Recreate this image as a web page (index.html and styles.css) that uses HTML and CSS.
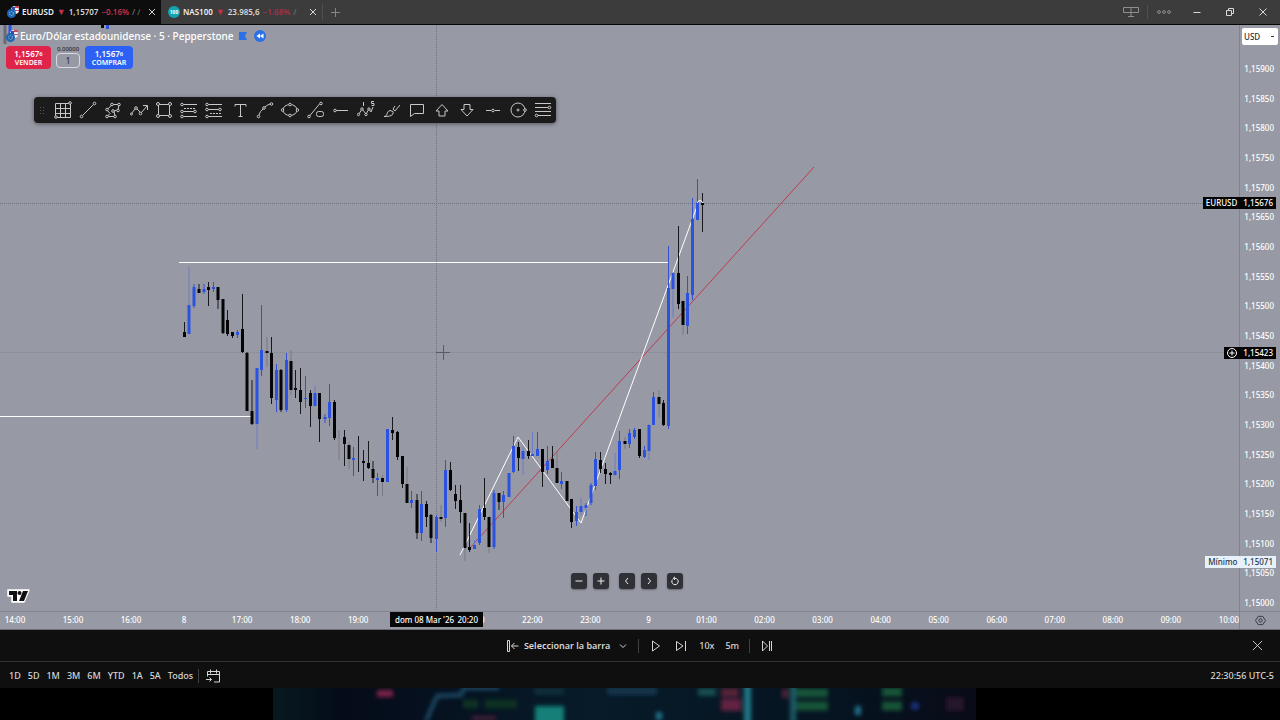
FILE: index.html
```html
<!DOCTYPE html>
<html lang="es">
<head>
<meta charset="utf-8">
<title>EURUSD 1,15707</title>
<link rel="stylesheet" href="styles.css">
</head>
<body>
<header class="titlebar">
  <div class="tab tab-active">
    <svg class="pair" viewBox="0 0 12 12"><circle cx="8" cy="4" r="4" fill="#e9eef8"/><path d="M8 0h4v2H8zM8 4h4v1H8z" fill="#d1485a"/><path d="M5 1h3v3H5z" fill="#2b4ea0"/><circle cx="4.500" cy="7.500" r="4.500" fill="#1d67b4"/><circle cx="4.500" cy="7.500" r="2" fill="none" stroke="#b9cf7c" stroke-dasharray="1 1"/></svg>
    <span class="tab-name">EURUSD</span><span class="down">▼</span><span>1,15707</span><span class="neg">−0.16%</span><span class="fade">/ ∕</span>
    <button class="close" aria-label="Cerrar pestaña"><svg viewBox="0 0 8 8"><path d="M1 1l6 6M7 1L1 7"/></svg></button>
  </div>
  <div class="tab tab-second">
    <svg class="pair" viewBox="0 0 12 12"><circle cx="6" cy="6" r="6" fill="#14a3b0"/><text x="6" y="8" text-anchor="middle" class="badge-text">100</text></svg>
    <span class="tab-name">NAS100</span><span class="down">▼</span><span>23.985,6</span><span class="neg dim">−1.68%</span><span class="fade">/</span>
    <button class="close" aria-label="Cerrar pestaña"><svg viewBox="0 0 8 8"><path d="M1 1l6 6M7 1L1 7"/></svg></button>
  </div>
  <button class="newtab" aria-label="Nueva pestaña"><svg viewBox="0 0 10 10"><path d="M5 0v10M0 5h10"/></svg></button>
  <div class="window-tools">
    <button class="wide" aria-label="Disposición"><svg viewBox="0 0 16 12"><path d="M.5 1.500h15v5H.5zM8 1.500v9M5 10.500h6"/></svg></button>
    <button class="wide dots" aria-label="Más"><svg viewBox="0 0 14 6"><circle cx="2" cy="3" r="1.400"/><circle cx="7" cy="3" r="1.400"/><circle cx="12" cy="3" r="1.400"/></svg></button>
    <button aria-label="Minimizar"><svg viewBox="0 0 8 8"><path d="M.5 4.500h7"/></svg></button>
    <button aria-label="Restaurar"><svg viewBox="0 0 8 8"><path d="M.5 2.500h5v5h-5zM2.500 2V.5h5v5H6"/></svg></button>
    <button aria-label="Cerrar"><svg viewBox="0 0 8 8"><path d="M.5.5l7 7M7.500.5l-7 7"/></svg></button>
  </div>
</header>

<main class="workspace">
  <section class="pane">
    <svg class="plot">
      <g transform="translate(0 -25)">
        <path class="dotted" d="M0 203.500H1239"/>
        <path class="dotted soft" d="M0 352.500H1239"/>
        <path class="dotted" d="M436.500 25V612"/>
        <path class="faint-body" d="M5 25V44"/>
        <path class="black-body" d="M102.500 25V28"/>
        <path class="blue-body" d="M10 25V36M107.500 25V29"/>
        <path class="white-line" d="M179 262.500H668M0 416.500H252"/>
        <path class="red-line" d="M469 549L814 167"/>
        <path class="white-line" d="M460 555L518 437L581 523L699 201"/>
        <path class="faint-wick" d="M267 337V367M339 430V460M291 350V395M349 442V469M382.500 475V496M407 467V503M465 548V561M489 516V553M557 452V483M625 437V449M659 390V417M683 301V335M441 505V522"/>
        <path class="faint-blue" d="M189 267V306M257 424V449M315 386V406M523 447V475M532.500 432V456M581 498V515M615 453V476M649 424V460M673 272V318M474.500 540V549"/>
        <path class="black-wick" d="M184.500 322V337M199 284V293M208.500 282V306M218 287V309M223 299V334M227.500 310V336M232.500 332V338M242.500 294V353M247 352V411M252 380V425M271.500 337V404M281 369V412M295.500 370V398M300.500 368V414M310.500 390V427M319.500 393V442M334.500 400V440M344.500 430V466M358.500 436V472M363.500 450V481M368.500 441V469M373 461V483M392.500 417V440M397.500 431V460M402.500 456V488M417 494V539M426.500 501V527M431 514V543M450.500 462V491M455.500 485V509M460.500 485V523M469.500 523V552M484.500 478V520M499 493V510M518.500 442V471M528.500 440V459M542.500 449V487M552.500 446V468M567 481V501M571.500 499V528M600.500 452V473M605.500 463V484M610.500 472V484M639.500 429V458M663.500 400V426M678.500 226V309M702.500 193V232"/>
        <path class="blue-wick" d="M194 284V308M204 284V294M213.500 282V292M237.500 330V338M261.500 305V376M276.500 364V412M286.500 353V412M305.500 376V408M325 414V423M329.500 384V426M353.500 447V476M377.500 473V496M411.500 491V508M421.500 491V541M436.500 515V552M445.500 460V527M479.500 505V545M494 490V549M503.500 491V518M513.500 436V473M537.500 432V456M547.500 446V474M561.500 472V489M576.500 506V526M586 503V516M591 483V505M595.500 452V490M619.500 431V479M629.500 429V448M634.500 428V439M644.500 446V458M653.500 392V425M668.500 246V429M687.500 276V334M692.500 198V300M697.500 179V220"/>
        <path class="black-body" d="M184.500 332V337M199 289V293M208.500 287V290M218 287V300M223 299V333M227.500 320V334M232.500 332V336M242.500 329V352M247 353V411M252 411V424M267 351V353M271.500 353V398M281 370V410M291 361V390M295.500 388V390M300.500 390V402M310.500 393V406M319.500 393V419M334.500 402V438M344.500 437V444M349 445V459M363.500 461V463M368.500 463V468M373 469V478M382.500 478V482M392.500 430V433M397.500 432V457M402.500 456V484M407 484V503M417 500V533M426.500 504V517M431 515V538M441 517V519M450.500 470V490M455.500 494V501M460.500 500V512M465 513V548M469.500 547V550M484.500 508V517M489 517V547M499 493V502M518.500 447V458M528.500 451V456M542.500 449V472M552.500 459V468M557 468V483M567 481V501M571.500 499V522M600.500 460V469M605.500 469V474M610.500 473V475M625 441V444M639.500 429V456M659 397V404M663.500 403V425M678.500 273V304M683 301V325M702.500 203V205"/>
        <path class="blue-body" d="M189 305V334M194 287V306M204 289V292M213.500 287V289M237.500 332V335M257 368V424M261.500 350V370M276.500 370V400M286.500 360V410M305.500 398V399M315 393V406M325 417V419M329.500 402V418M353.500 458V460M377.500 478V480M387.500 429V482M411.500 500V503M421.500 504V533M436.500 517V539M445.500 470V518M474.500 545V549M479.500 509V543M494 493V547M503.500 495V502M509 473V497M513.500 446V472M523 451V459M532.500 454V456M537.500 449V456M547.500 461V470M561.500 481V484M576.500 512V521M581 506V512M586 505V508M591 485V503M595.500 459V486M615 471V475M619.500 441V470M629.500 433V444M634.500 430V437M644.500 450V457M649 425V451M653.500 397V425M668.500 288V426M673 273V289M687.500 293V326M692.500 219V295M697.500 202V220"/>
        <path class="white-line" d="M697 203Q700 198 703 203"/>
        <path class="cursor" d="M436 352.500H450M443.500 345V360"/>
      </g>
    </svg>

    <div class="legend">
      <svg class="pair" viewBox="0 0 12 12"><circle cx="8" cy="4" r="4" fill="#e9eef8"/><path d="M8 0h4v2H8zM8 4h4v1H8z" fill="#d1485a"/><path d="M5 1h3v3H5z" fill="#2b4ea0"/><circle cx="4.500" cy="7.500" r="4.500" fill="#1d67b4"/><circle cx="4.500" cy="7.500" r="2" fill="none" stroke="#9fc0df" stroke-dasharray="1 1"/></svg>
      <h1>Euro/Dólar estadounidense · 5 · Pepperstone</h1>
      <svg class="flag" viewBox="0 0 8 8"><path d="M0 0h8L6 4l2 4H0z"/></svg>
      <svg class="rewind" viewBox="0 0 12 12"><circle cx="6" cy="6" r="6"/><path d="M6 3.500v5L2.500 6zM9.500 3.500v5L6 6z"/></svg>
    </div>
    <div class="trade">
      <button class="order sell"><span>1,1567<sup>6</sup></span><span>VENDER</span></button>
      <div class="lot"><span>0,00000</span><button>1</button></div>
      <button class="order buy"><span>1,1567<sup>6</sup></span><span>COMPRAR</span></button>
    </div>

    <div class="drawbar" role="toolbar" aria-label="Herramientas de dibujo">
      <button aria-label="Cuadrícula"><svg viewBox="0 0 18 18"><path d="M1.500 2.500h15v14h-15zM6.500 2.500v14M11.500 2.500v14M1.500 7.500h15M1.500 12.500h15"/><circle cx="16" cy="2" r="1.300"/><circle cx="2" cy="16" r="1.300"/></svg></button>
      <button aria-label="Línea de tendencia"><svg viewBox="0 0 18 18"><path d="M3.500 14.500l11-11"/><circle cx="2.500" cy="15.500" r="1.300"/><circle cx="15.500" cy="2.500" r="1.300"/></svg></button>
      <button aria-label="Polígono"><svg viewBox="0 0 18 18"><path d="M3 9l5-5.500h7L14 9l-4 1 1 5.500H3l3-3z"/><circle cx="8" cy="3.500" r="1.300"/><circle cx="15" cy="3.500" r="1.300"/><circle cx="14" cy="9.500" r="1.300"/><circle cx="9" cy="10" r="1.300"/><circle cx="3" cy="8.500" r="1.300"/><circle cx="3" cy="15.500" r="1.300"/><circle cx="11" cy="15.500" r="1.300"/></svg></button>
      <button aria-label="Trayectoria"><svg viewBox="0 0 18 18"><path d="M1 13l4-5M7 8l4 4 6-7M13 4.500h4.500V9"/><circle cx="6" cy="7" r="1.300"/><circle cx="10.500" cy="12.500" r="1.300"/><circle cx="1.500" cy="13" r="1"/></svg></button>
      <button aria-label="Rectángulo"><svg viewBox="0 0 18 18"><path d="M3.500 3.500h11v11h-11z"/><circle cx="3" cy="3" r="1.500"/><circle cx="15" cy="3" r="1.500"/><circle cx="3" cy="15" r="1.500"/><circle cx="15" cy="15" r="1.500"/></svg></button>
      <button aria-label="Posición larga"><svg viewBox="0 0 18 18"><path d="M3 3.500h14M3 10.500h11M3 15.500h14"/><path d="M4 7.500h11" stroke-dasharray="2 1"/><circle cx="2" cy="3.500" r="1.300"/><circle cx="2" cy="10.500" r="1.300"/><circle cx="15" cy="10.500" r="1.300"/><circle cx="2" cy="15.500" r="1.300"/></svg></button>
      <button aria-label="Posición corta"><svg viewBox="0 0 18 18"><path d="M3 3.500h14M3 8.500h11M3 15.500h14"/><path d="M5 12.500h11" stroke-dasharray="2 1"/><circle cx="2" cy="3.500" r="1.300"/><circle cx="2" cy="8.500" r="1.300"/><circle cx="15" cy="8.500" r="1.300"/><circle cx="2" cy="15.500" r="1.300"/></svg></button>
      <button aria-label="Texto"><svg viewBox="0 0 18 18"><path d="M4 5.500v-2h11v2M9.500 3.500v12M7.500 15.500h4"/></svg></button>
      <button aria-label="Curva"><svg viewBox="0 0 18 18"><path d="M3 14q1-4 4-6M9 6q2-2 5-3"/><circle cx="2.500" cy="15.500" r="1.300"/><circle cx="8" cy="7" r="1.300"/><circle cx="15.500" cy="3" r="1.300"/></svg></button>
      <button aria-label="Elipse"><svg viewBox="0 0 18 18"><ellipse cx="9" cy="9" rx="7" ry="5.500"/><circle cx="9" cy="3.500" r="1.300"/><circle cx="9" cy="14.500" r="1.300"/><circle cx="1.500" cy="9" r="1.300"/><circle cx="16.500" cy="9" r="1.300"/></svg></button>
      <button aria-label="Línea con información"><svg viewBox="0 0 18 18"><path d="M2.500 15l10-12"/><circle cx="2" cy="15.500" r="1.300"/><circle cx="14" cy="2.500" r="1.300"/><rect x="9.500" y="10.500" width="7" height="5" rx="2"/></svg></button>
      <button aria-label="Rayo horizontal"><svg viewBox="0 0 18 18"><path d="M4 9.500h12"/><circle cx="3" cy="9.500" r="1.300"/></svg></button>
      <button aria-label="Ondas de Elliott"><svg viewBox="0 0 18 18"><path d="M2 13l3-5 4 5 3-5 2 3 2-5M6.500 1v4M6 1.500h1M17 .5h-2.500v2H17v2h-2.500"/><circle cx="1.500" cy="13.500" r="1.200"/><circle cx="5" cy="8" r="1.200"/><circle cx="9" cy="13.500" r="1.200"/><circle cx="12" cy="8" r="1.200"/></svg></button>
      <button aria-label="Pincel"><svg viewBox="0 0 18 18"><path d="M1 15.500c4 0 2-5 6-6l3 1c1 4-3 5-9 5zM10 8l2 2 5-6M10 8l2-3"/></svg></button>
      <button aria-label="Comentario"><svg viewBox="0 0 18 18"><path d="M2.500 3.500h13v9h-9l-4 3z"/></svg></button>
      <button aria-label="Flecha arriba"><svg viewBox="0 0 18 18"><path d="M9 3.500l6 6.500h-3v5H6v-5H3z"/></svg></button>
      <button aria-label="Flecha abajo"><svg viewBox="0 0 18 18"><path d="M9 15l6-6.500h-3v-5H6v5H3z"/></svg></button>
      <button aria-label="Línea horizontal"><svg viewBox="0 0 18 18"><path d="M2 9.500h5M11 9.500h5"/><circle cx="9" cy="9.500" r="1.300"/></svg></button>
      <button aria-label="Círculo"><svg viewBox="0 0 18 18"><circle cx="9" cy="9" r="7"/><circle cx="9" cy="9" r="1"/><circle cx="16" cy="9" r="1.300"/></svg></button>
      <button aria-label="Retroceso de Fibonacci"><svg viewBox="0 0 18 18"><path d="M1 2.500h16M1 6.500h13M1 10.500h16M4 14.500h13"/><circle cx="15.500" cy="6.500" r="1.300"/><circle cx="2.500" cy="14.500" r="1.300"/></svg></button>
    </div>

    <svg class="brand" viewBox="0 0 23 14"><path d="M1 1h21l-5 12H5V7H1z" fill="#fff" stroke="#fff" stroke-width="1.500" stroke-linejoin="round"/><path d="M2 2h8v10H6V6H2zM16 2h5l-4 10h-5z" fill="#101014"/><circle cx="12.500" cy="4" r="2" fill="#101014"/></svg>

    <div class="zoombar">
      <button aria-label="Alejar"><svg viewBox="0 0 10 10"><path d="M1.500 5h7"/></svg></button>
      <button aria-label="Acercar"><svg viewBox="0 0 10 10"><path d="M1.500 5h7M5 1.500v7"/></svg></button>
      <button class="gap" aria-label="Izquierda"><svg viewBox="0 0 10 10"><path d="M6 2L3.500 5 6 8"/></svg></button>
      <button aria-label="Derecha"><svg viewBox="0 0 10 10"><path d="M4 2l2.500 3L4 8"/></svg></button>
      <button class="gap" aria-label="Restablecer"><svg viewBox="0 0 10 10"><path d="M2.500 3.500A3.200 3.200 0 1 0 5 2.300H3.500M5 .8L3.300 2.300 5 3.800"/></svg></button>
    </div>
  </section>

  <aside class="price-axis">
    <select class="currency" aria-label="Divisa"><option>USD</option></select>
    <div class="prices">
      <span>1,15900</span><span>1,15850</span><span>1,15800</span><span>1,15750</span><span>1,15700</span><span>1,15650</span><span>1,15600</span><span>1,15550</span><span>1,15500</span><span>1,15450</span><span>1,15400</span><span>1,15350</span><span>1,15300</span><span>1,15250</span><span>1,15200</span><span>1,15150</span><span>1,15100</span><span>1,15050</span><span>1,15000</span>
    </div>
    <div class="tag tag-last"><span>EURUSD</span><span>1,15676</span></div>
    <div class="tag tag-cross"><svg viewBox="0 0 10 10"><circle cx="5" cy="5" r="4.500"/><path d="M5 2.500v5M2.500 5h5"/></svg><span>1,15423</span></div>
    <div class="tag tag-low"><span>Mínimo</span><span>1,15071</span></div>
  </aside>

  <div class="time-axis">
    <div class="hours hours-prev"><span>14:00</span><span>15:00</span><span>16:00</span></div>
    <div class="hours hours-main"><span>8</span><span>17:00</span><span>18:00</span><span>19:00</span><span></span><span>21:00</span><span>22:00</span><span>23:00</span><span>9</span><span>01:00</span><span>02:00</span><span>03:00</span><span>04:00</span><span>05:00</span><span>06:00</span><span>07:00</span><span>08:00</span><span>09:00</span><span>10:00</span></div>
    <div class="time-tag"><span>dom 08 Mar '26</span><span>20:20</span></div>
  </div>
  <button class="axis-settings" aria-label="Ajustes"><svg viewBox="0 0 12 12"><path d="M3.500 1.500h5L11.500 6l-3 4.500h-5L.5 6z"/><circle cx="6" cy="6" r="1.800"/></svg></button>
</main>

<section class="replay">
  <div class="replay-controls">
    <button class="select-bar"><svg viewBox="0 0 12 12"><path d="M.5.5h2v11h-2zM4.500 6h7M7.500 3l-3 3 3 3"/></svg>Seleccionar la barra<svg class="chev" viewBox="0 0 8 8"><path d="M1 2.500l3 3 3-3"/></svg></button>
    <i class="rule"></i>
    <button aria-label="Reproducir"><svg viewBox="0 0 12 12"><path d="M2.500 1v10l7-5z"/></svg></button>
    <button aria-label="Avanzar"><svg viewBox="0 0 12 12"><path d="M1.500 1.500v9L8 6zM10.500 1v10"/></svg></button>
    <button class="speed">10x</button>
    <button class="speed">5m</button>
    <i class="rule"></i>
    <button aria-label="Ir al tiempo real"><svg viewBox="0 0 12 12"><path d="M1.500 1v10L6.500 6zM8.500 1v10M10.500 1v10"/></svg></button>
  </div>
  <button class="replay-close" aria-label="Cerrar reproducción"><svg viewBox="0 0 12 12"><path d="M1 1l10 10M11 1L1 11"/></svg></button>
</section>

<footer class="ranges">
  <button>1D</button><button>5D</button><button>1M</button><button>3M</button><button>6M</button><button>YTD</button><button>1A</button><button>5A</button><button>Todos</button>
  <i class="rule"></i>
  <button aria-label="Ir a fecha"><svg viewBox="0 0 14 14"><path d="M1.500 7.500v-5h12v10.500h-5.500M1.500 5.500h12M4.500 .5v4M10.500 .5v4M0 10.500h5.500M3.500 8.500l2 2-2 2"/></svg></button>
  <span class="clock">22:30:56 UTC-5</span>
</footer>

<div class="backdrop">
  <svg viewBox="0 0 703 32" preserveAspectRatio="none">
    <defs><filter id="soft" x="-5%" y="-20%" width="110%" height="140%"><feGaussianBlur stdDeviation="2"/></filter>
    <linearGradient id="night"><stop offset="0" stop-color="#07191f"/><stop offset=".1" stop-color="#050b19"/><stop offset=".45" stop-color="#071b29"/><stop offset=".8" stop-color="#061320"/><stop offset="1" stop-color="#090b18"/></linearGradient></defs>
    <rect width="703" height="32" fill="url(#night)"/>
    <g filter="url(#soft)">
      <path d="M153 33L164 8L188 7L191 0H226" fill="none" stroke="#1b4b68" stroke-width="4"/>
      <rect x="104" y="2" width="16" height="7" fill="#7c2446"/>
      <path d="M190 16h15M212 16h32" stroke="#0d3024" stroke-width="9"/>
      <rect x="262" y="18" width="29" height="18" fill="#188078"/>
      <rect x="261" width="30" height="7" fill="#0d2d3a"/>
      <path d="M334 3h50" stroke="#12364a" stroke-width="8"/>
      <rect x="425" y="0" width="18" height="8" fill="#14504f"/>
      <rect x="448" y="0" width="18" height="9" fill="#572039"/><rect x="448" y="11" width="20" height="12" fill="#632442"/>
      <path d="M474.500 -4v40" stroke="#207786" stroke-width="7"/><path d="M520 -4v40" stroke="#1c5964" stroke-width="6"/>
      <rect x="509" y="1" width="6" height="9" fill="#502039"/>
      <path d="M523 5h32M523 18h32M609 4h20M609 18h20" stroke="#175537" stroke-width="9"/>
      <path d="M386 24v8M585 18v9" stroke="#22718a" stroke-width="6"/><circle cx="642" cy="18" r="4" fill="#17337a"/><rect x="199" y="28" width="24" height="4" fill="#481d39"/><rect x="673" y="9" width="18" height="14" fill="#28142c"/>
    </g>
  </svg>
</div>
</body>
</html>
```
FILE: styles.css
```css
* { box-sizing: border-box; }

body {
  margin: 0;
  height: 100vh;
  display: flex;
  flex-direction: column;
  overflow: hidden;
  background: #000;
  color: #d6d6d6;
  font: 500 9px/12px "Noto Sans", "Open Sans", sans-serif;
}

button {
  display: flex;
  align-items: center;
  justify-content: center;
  padding: 0;
  border: 0;
  background: none;
  color: inherit;
  font: inherit;
}

svg { display: block; flex: none; fill: none; stroke: currentColor; }

/* Title bar */
.titlebar {
  display: flex;
  height: 25px;
  flex: none;
  background: #3c3c3c;
  border-bottom: 1px solid #050505;
  white-space: nowrap;
}
.tab {
  display: flex;
  align-items: center;
  gap: 3px;
  width: 161px;
  padding: 0 5px 0 7px;
  font-size: 8px;
  font-weight: 600;
}
.tab-active { background: #0d0d0d; }
.tab-second { border-radius: 4px 0 0 0; }
.tab-name { color: #f0f0f0; }
.pair { width: 12px; height: 12px; stroke: none; }
.badge-text { fill: #fff; font: 700 5px "Noto Sans", sans-serif; }
.down { color: #c5304a; font-size: 9px; }
.neg { color: #c5304a; }
.dim { color: #a5304a; }
.fade { color: #6a6a6a; flex: 1; }
.close svg { width: 8px; height: 8px; }
.newtab { width: 25px; height: 16px; margin-top: 4px; border-left: 1px solid #505050; color: #8c8c8c; }
.newtab svg { width: 9px; height: 9px; }
.window-tools { display: flex; margin-left: auto; padding-right: 1px; color: #d8d8d8; }
.window-tools button { width: 33px; }
.window-tools svg { width: 8px; height: 8px; }
.window-tools .wide { color: #8f8f8f; }
.window-tools .wide svg { width: 16px; height: 12px; }
.window-tools .dots { border-left: 1px solid #505050; height: 14px; margin-top: 5px; }
.window-tools .dots svg { width: 14px; height: 6px; }

/* Chart */
.workspace {
  flex: 1;
  min-height: 0;
  display: grid;
  grid-template-columns: 1fr 41px;
  grid-template-rows: 1fr 18px;
  background: #979aa4;
  border-bottom: 1px solid #6d6f77;
}
.pane { position: relative; min-width: 0; overflow: hidden; }
.plot { position: absolute; inset: 0; width: 100%; height: 100%; }
.dotted { stroke: #70737c; stroke-dasharray: 1 1; }
.soft { stroke: #83868f; }
.white-line { stroke: #fff; }
.red-line { stroke: #c23a52; }
.black-wick { stroke: #17181c; }
.blue-wick { stroke: #3551d2; }
.faint-wick { stroke: #777a82; }
.faint-blue { stroke: #6d7bc9; }
.black-body { stroke: #050507; stroke-width: 3; }
.blue-body { stroke: #2c53e0; stroke-width: 3; }
.faint-body { stroke: #686b74; stroke-width: 3; }
.cursor { stroke: #5a5c64; }

.legend {
  position: relative;
  display: flex;
  align-items: center;
  height: 16px;
  margin: 3px 0 0 6px;
  gap: 2px;
}
.legend h1 { margin: 0; font-size: 10px; font-weight: 500; line-height: 16px; color: #fff; }
.legend .flag { width: 8px; height: 8px; margin: 0 5px 0 3px; fill: #2c70e8; stroke: none; }
.legend .rewind { width: 12px; height: 12px; stroke: none; fill: #2c70e8; }
.legend .rewind path { fill: #fff; }

.trade { position: relative; display: flex; margin: 2px 0 0 6px; gap: 5px; color: #fff; }
.order {
  flex-direction: column;
  width: 45px;
  height: 23px;
  border-radius: 4px;
  font-size: 8px;
  line-height: 9px;
  font-weight: 600;
}
.order span:last-child { font-size: 7px; }
.order sup { font-size: 6px; line-height: 0; vertical-align: 1px; }
.sell { background: #df2349; }
.buy { background: #2d61f3; width: 48px; }
.lot { width: 24px; font-size: 6px; line-height: 7px; color: #303238; text-align: center; }
.lot button { width: 24px; height: 15px; border: 1px solid #d9dbe1; border-radius: 4px; font-size: 8px; }

.drawbar {
  position: relative;
  display: flex;
  width: 522px;
  height: 26px;
  margin: 28px 0 0 34px;
  padding: 0 0 0 16px;
  border-radius: 4px;
  background: #1b1b1b;
  color: #c8c8c8;
  box-shadow: 0 1px 4px #55575f;
}
.drawbar::before {
  content: "";
  position: absolute;
  left: 5px;
  top: 9px;
  width: 5px;
  height: 9px;
  background: radial-gradient(circle, #575757 1px, transparent 1px) 0 0 / 3px 3px;
}
.drawbar button { flex: 1; }
.drawbar svg { width: 18px; height: 18px; }
.drawbar circle { fill: #1b1b1b; }

.brand { position: absolute; left: 7px; bottom: 8px; width: 23px; height: 14px; stroke: none; }

.zoombar {
  position: absolute;
  left: 571px;
  bottom: 22px;
  display: flex;
  gap: 6px;
  color: #f0f0f0;
}
.zoombar button { width: 16px; height: 16px; border-radius: 3px; background: #303136; box-shadow: 0 1px 2px #666971; }
.zoombar .gap { margin-left: 4px; }
.zoombar svg { width: 10px; height: 10px; }

/* Axes */
.price-axis {
  position: relative;
  display: flex;
  flex-direction: column;
  border-left: 1px solid #81848d;
  color: #fff;
  font-size: 8px;
  line-height: 10px;
}
.currency {
  appearance: none;
  width: 36px;
  height: 17px;
  margin: 3px 0 0 2px;
  padding: 0 2px;
  border: 0;
  border-radius: 2px;
  color: #2a2c32;
  font: inherit;
  background: #fff linear-gradient(#333, #333) no-repeat 29px 8px / 3px 1px;
}
.prices {
  flex: 1;
  display: flex;
  flex-direction: column;
  justify-content: space-between;
  padding: 19px 6px 3px 0;
  text-align: right;
}
.tag {
  position: absolute;
  right: 4px;
  display: flex;
  gap: 6px;
  height: 12px;
  padding: 0 3px;
  line-height: 12px;
  background: #050505;
}
.tag-last { top: 172px; }
.tag-cross { top: 322px; align-items: center; }
.tag-cross svg { width: 10px; height: 10px; }
.tag-low { top: 531px; background: #e6f1fc; color: #2a3444; }

.time-axis {
  position: relative;
  display: flex;
  min-width: 0;
  overflow: hidden;
  border-top: 1px solid #81848d;
  color: #fff;
  font-size: 8px;
  line-height: 16px;
}
.hours { display: grid; grid-auto-flow: column; text-align: center; }
.hours-prev { grid-auto-columns: 58px; margin-left: -14px; }
.hours-main { flex: 1; grid-auto-columns: 1fr; margin: 0 -19px 0 -5px; }
.time-tag {
  position: absolute;
  left: 390px;
  top: 0;
  display: flex;
  justify-content: space-between;
  width: 93px;
  height: 15px;
  padding: 0 5px;
  background: #080808;
  white-space: nowrap;
}
.axis-settings { border: 1px solid #81848d; border-width: 1px 0 0 1px; color: #33353b; }
.axis-settings svg { width: 11px; height: 11px; }

/* Replay controls */
.replay {
  display: flex;
  align-items: center;
  flex: none;
  height: 32px;
  background: #0f0f0f;
  border-bottom: 1px solid #303030;
}
.replay-controls { flex: 1; display: flex; align-items: center; justify-content: center; gap: 13px; }
.replay-controls svg { width: 12px; height: 12px; }
.select-bar { gap: 5px; font-weight: 600; }
.replay-controls .chev { width: 8px; height: 8px; margin-left: 4px; }
.rule { width: 1px; height: 14px; background: #404040; }
.replay .rule { margin: 0 -2px; }
.speed { margin: 0 -1px; }
.replay-close { width: 46px; margin-left: -46px; }
.replay-close svg { width: 11px; height: 11px; }

/* Range buttons */
.ranges {
  display: flex;
  align-items: center;
  flex: none;
  gap: 7px;
  height: 26px;
  padding: 1px 6px 0 9px;
  background: #0f0f0f;
}
.ranges .rule { margin-left: -2px; }
.ranges svg { width: 14px; height: 14px; }
.clock { margin-left: auto; }

.backdrop { flex: none; height: 32px; margin: 0 304px 0 273px; }
.backdrop svg { width: 100%; height: 32px; stroke: none; }
```
